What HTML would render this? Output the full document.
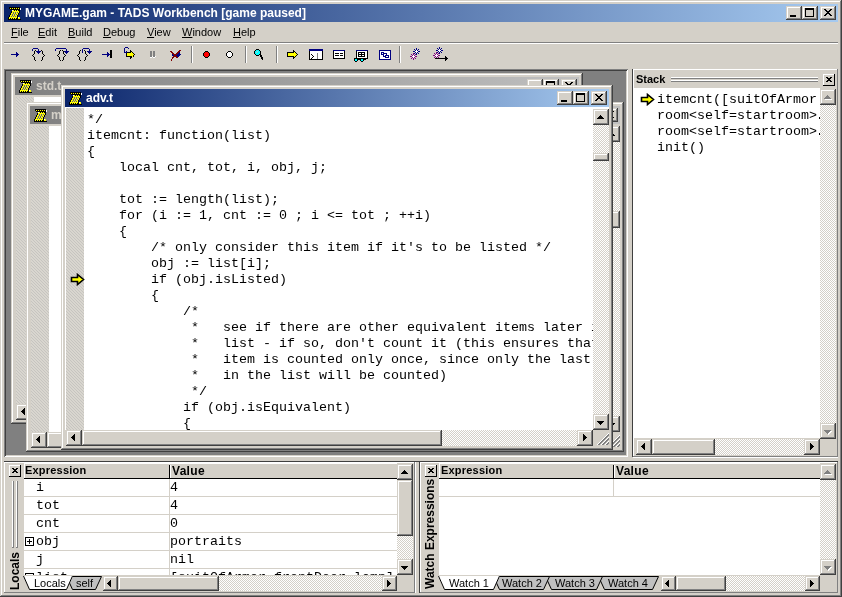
<!DOCTYPE html><html><head><meta charset="utf-8"><style>
*{margin:0;padding:0}
html,body{width:842px;height:597px;overflow:hidden}
body{position:relative;background:#d4d0c8;font-family:"Liberation Sans",sans-serif;font-size:11px;color:#000}
.a{position:absolute}
.t{white-space:pre;line-height:13px}
.mono{font-family:"Liberation Mono",monospace;font-size:13.33px;line-height:16px;white-space:pre}
.trk{background-color:#fff;background-image:conic-gradient(#d4d0c8 25%,#fff 0 50%,#d4d0c8 0 75%,#fff 0);background-size:2px 2px}
.hatch{background:repeating-linear-gradient(45deg,#d9d6cf 0 1.3px,#c6c4c0 1.3px 2.12px)}
</style></head><body><div id="root" style="position:absolute;left:0;top:0;width:842px;height:597px;overflow:hidden;will-change:transform">
<div class="a " style="left:0px;top:0px;width:842px;height:597px;box-shadow:inset -1px -1px #404040,inset 1px 1px #d4d0c8,inset -2px -2px #808080,inset 2px 2px #fff;"></div>
<div class="a " style="left:4px;top:4px;width:834px;height:18px;background:linear-gradient(to right,#0a246a,#a6caf0)"></div>
<svg class="a" style="left:6px;top:5px" width="16" height="16" shape-rendering="crispEdges"><path d="M3 2h1v1h-1zM4 2h1v1h-1zM5 2h1v1h-1zM6 2h1v1h-1zM7 2h1v1h-1zM8 2h1v1h-1zM9 2h1v1h-1zM10 2h1v1h-1zM11 2h1v1h-1zM12 2h1v1h-1zM13 2h1v1h-1zM3 3h1v1h-1zM5 3h1v1h-1zM7 3h1v1h-1zM9 3h1v1h-1zM11 3h1v1h-1zM13 3h1v1h-1zM4 4h1v1h-1zM5 4h1v1h-1zM6 4h1v1h-1zM7 4h1v1h-1zM8 4h1v1h-1zM9 4h1v1h-1zM10 4h1v1h-1zM11 4h1v1h-1zM12 4h1v1h-1zM13 4h1v1h-1zM8 5h1v1h-1zM10 5h1v1h-1zM12 5h1v1h-1zM13 5h1v1h-1zM5 6h1v1h-1zM13 6h1v1h-1zM5 7h1v1h-1zM13 7h1v1h-1zM4 8h1v1h-1zM12 8h1v1h-1zM4 9h1v1h-1zM12 9h1v1h-1zM3 10h1v1h-1zM11 10h1v1h-1zM3 11h1v1h-1zM11 11h1v1h-1zM2 12h1v1h-1zM11 12h1v1h-1zM2 13h1v1h-1zM4 13h1v1h-1zM6 13h1v1h-1zM8 13h1v1h-1zM10 13h1v1h-1zM11 13h1v1h-1zM2 14h1v1h-1zM3 14h1v1h-1zM4 14h1v1h-1zM5 14h1v1h-1zM6 14h1v1h-1zM7 14h1v1h-1zM8 14h1v1h-1zM9 14h1v1h-1zM10 14h1v1h-1zM11 14h1v1h-1zM12 14h1v1h-1zM13 14h1v1h-1zM14 14h1v1h-1z" fill="#000"/><path d="M4 3h1v1h-1zM6 3h1v1h-1zM8 3h1v1h-1zM10 3h1v1h-1zM12 3h1v1h-1zM7 5h1v1h-1zM9 5h1v1h-1zM11 5h1v1h-1zM6 6h1v1h-1zM7 6h1v1h-1zM8 6h1v1h-1zM9 6h1v1h-1zM10 6h1v1h-1zM11 6h1v1h-1zM12 6h1v1h-1zM6 7h1v1h-1zM8 7h1v1h-1zM10 7h1v1h-1zM12 7h1v1h-1zM5 8h1v1h-1zM6 8h1v1h-1zM8 8h1v1h-1zM10 8h1v1h-1zM11 8h1v1h-1zM5 9h1v1h-1zM7 9h1v1h-1zM9 9h1v1h-1zM11 9h1v1h-1zM4 10h1v1h-1zM5 10h1v1h-1zM7 10h1v1h-1zM9 10h1v1h-1zM10 10h1v1h-1zM4 11h1v1h-1zM6 11h1v1h-1zM8 11h1v1h-1zM10 11h1v1h-1zM3 12h1v1h-1zM4 12h1v1h-1zM5 12h1v1h-1zM6 12h1v1h-1zM7 12h1v1h-1zM8 12h1v1h-1zM9 12h1v1h-1zM10 12h1v1h-1zM13 12h1v1h-1zM3 13h1v1h-1zM5 13h1v1h-1zM7 13h1v1h-1zM9 13h1v1h-1zM12 13h1v1h-1zM13 13h1v1h-1z" fill="#ffff00"/><path d="M14 3h1v1h-1zM14 4h1v1h-1zM6 5h1v1h-1zM12 12h1v1h-1z" fill="#fff"/><path d="M7 7h1v1h-1zM9 7h1v1h-1zM11 7h1v1h-1zM7 8h1v1h-1zM9 8h1v1h-1zM6 9h1v1h-1zM8 9h1v1h-1zM10 9h1v1h-1zM6 10h1v1h-1zM8 10h1v1h-1zM5 11h1v1h-1zM7 11h1v1h-1zM9 11h1v1h-1z" fill="#5a5a8a"/></svg>
<div class="a t " style="left:25px;top:7px;color:#fff;font-weight:bold;font-size:12px">MYGAME.gam - TADS Workbench [game paused]</div>
<div class="a " style="left:786px;top:6px;width:16px;height:14px;background:#d4d0c8;box-shadow:inset -1px -1px #404040,inset 1px 1px #d4d0c8,inset -2px -2px #808080,inset 2px 2px #fff;"><div class="a" style="left:4px;top:9px;width:6px;height:2px;background:#000"></div></div>
<div class="a " style="left:802px;top:6px;width:16px;height:14px;background:#d4d0c8;box-shadow:inset -1px -1px #404040,inset 1px 1px #d4d0c8,inset -2px -2px #808080,inset 2px 2px #fff;"><div class="a" style="left:3px;top:2px;width:9px;height:9px;box-sizing:border-box;border:1px solid #000;border-top-width:2px"></div></div>
<div class="a " style="left:820px;top:6px;width:16px;height:14px;background:#d4d0c8;box-shadow:inset -1px -1px #404040,inset 1px 1px #d4d0c8,inset -2px -2px #808080,inset 2px 2px #fff;"><svg class="a" style="left:4px;top:3px" width="8" height="7" viewBox="0 0 8 7"><path d="M0 0h2v1h1v1h2v-1h1v-1h2v1h-1v1h-1v1h-1v1h1v1h1v1h1v1h-2v-1h-1v-1h-2v1h-1v1h-2v-1h1v-1h1v-1h1v-1h-1v-1h-1v-1h-1z" fill="#000"/></svg></div>
<div class="a t " style="left:11px;top:26px;font-size:11px"><u>F</u>ile</div>
<div class="a t " style="left:38px;top:26px;font-size:11px"><u>E</u>dit</div>
<div class="a t " style="left:68px;top:26px;font-size:11px"><u>B</u>uild</div>
<div class="a t " style="left:103px;top:26px;font-size:11px"><u>D</u>ebug</div>
<div class="a t " style="left:147px;top:26px;font-size:11px"><u>V</u>iew</div>
<div class="a t " style="left:182px;top:26px;font-size:11px"><u>W</u>indow</div>
<div class="a t " style="left:233px;top:26px;font-size:11px"><u>H</u>elp</div>
<div class="a" style="left:4px;top:42px;width:834px;height:1px;background:#808080"></div>
<div class="a" style="left:4px;top:43px;width:834px;height:1px;background:#ffffff"></div>
<svg class="a" style="left:8px;top:52px" width="12" height="5" shape-rendering="crispEdges"><path d="M8 0h1v1h-1zM8 1h1v1h-1zM9 1h1v1h-1zM3 2h1v1h-1zM4 2h1v1h-1zM5 2h1v1h-1zM6 2h1v1h-1zM7 2h1v1h-1zM8 2h1v1h-1zM9 2h1v1h-1zM10 2h1v1h-1zM8 3h1v1h-1zM9 3h1v1h-1zM8 4h1v1h-1z" fill="#000080"/></svg>
<svg class="a" style="left:30px;top:48px" width="18" height="13" shape-rendering="crispEdges"><path d="M3 0h1v1h-1zM4 0h1v1h-1zM5 0h1v1h-1zM6 0h1v1h-1zM7 0h1v1h-1zM2 1h1v1h-1zM8 1h1v1h-1zM2 2h1v1h-1zM8 2h1v1h-1zM6 3h1v1h-1zM7 3h1v1h-1zM8 3h1v1h-1zM9 3h1v1h-1zM10 3h1v1h-1zM7 4h1v1h-1zM8 4h1v1h-1zM9 4h1v1h-1zM8 5h1v1h-1z" fill="#000080"/><path d="M5 2h1v1h-1zM11 2h1v1h-1zM4 3h1v1h-1zM12 3h1v1h-1zM4 4h1v1h-1zM12 4h1v1h-1zM4 5h1v1h-1zM12 5h1v1h-1zM3 6h1v1h-1zM13 6h1v1h-1zM2 7h1v1h-1zM14 7h1v1h-1zM3 8h1v1h-1zM13 8h1v1h-1zM4 9h1v1h-1zM12 9h1v1h-1zM4 10h1v1h-1zM12 10h1v1h-1zM4 11h1v1h-1zM12 11h1v1h-1zM5 12h1v1h-1zM11 12h1v1h-1z" fill="#000"/></svg>
<svg class="a" style="left:52px;top:48px" width="18" height="13" shape-rendering="crispEdges"><path d="M4 0h1v1h-1zM5 0h1v1h-1zM6 0h1v1h-1zM7 0h1v1h-1zM8 0h1v1h-1zM9 0h1v1h-1zM10 0h1v1h-1zM11 0h1v1h-1zM12 0h1v1h-1zM13 0h1v1h-1zM3 1h1v1h-1zM14 1h1v1h-1zM3 2h1v1h-1zM14 2h1v1h-1zM12 3h1v1h-1zM13 3h1v1h-1zM14 3h1v1h-1zM15 3h1v1h-1zM16 3h1v1h-1zM13 4h1v1h-1zM14 4h1v1h-1zM15 4h1v1h-1zM14 5h1v1h-1z" fill="#000080"/><path d="M8 2h1v1h-1zM10 2h1v1h-1zM7 3h1v1h-1zM11 3h1v1h-1zM7 4h1v1h-1zM11 4h1v1h-1zM7 5h1v1h-1zM11 5h1v1h-1zM6 6h1v1h-1zM12 6h1v1h-1zM5 7h1v1h-1zM13 7h1v1h-1zM6 8h1v1h-1zM12 8h1v1h-1zM7 9h1v1h-1zM11 9h1v1h-1zM7 10h1v1h-1zM11 10h1v1h-1zM7 11h1v1h-1zM11 11h1v1h-1zM8 12h1v1h-1zM10 12h1v1h-1z" fill="#000"/></svg>
<svg class="a" style="left:75px;top:48px" width="18" height="13" shape-rendering="crispEdges"><path d="M8 0h1v1h-1zM9 0h1v1h-1zM10 0h1v1h-1zM11 0h1v1h-1zM12 0h1v1h-1zM13 0h1v1h-1zM7 1h1v1h-1zM14 1h1v1h-1zM7 2h1v1h-1zM14 2h1v1h-1zM7 3h1v1h-1zM12 3h1v1h-1zM13 3h1v1h-1zM14 3h1v1h-1zM15 3h1v1h-1zM16 3h1v1h-1zM7 4h1v1h-1zM13 4h1v1h-1zM14 4h1v1h-1zM15 4h1v1h-1zM14 5h1v1h-1z" fill="#000080"/><path d="M5 2h1v1h-1zM9 2h1v1h-1zM4 3h1v1h-1zM10 3h1v1h-1zM4 4h1v1h-1zM10 4h1v1h-1zM4 5h1v1h-1zM10 5h1v1h-1zM3 6h1v1h-1zM11 6h1v1h-1zM2 7h1v1h-1zM12 7h1v1h-1zM3 8h1v1h-1zM11 8h1v1h-1zM4 9h1v1h-1zM10 9h1v1h-1zM4 10h1v1h-1zM10 10h1v1h-1zM4 11h1v1h-1zM10 11h1v1h-1zM5 12h1v1h-1zM9 12h1v1h-1z" fill="#000"/></svg>
<svg class="a" style="left:98px;top:50px" width="14" height="8" shape-rendering="crispEdges"><path d="M12 0h1v1h-1zM13 0h1v1h-1zM12 1h1v1h-1zM13 1h1v1h-1zM12 2h1v1h-1zM13 2h1v1h-1zM12 3h1v1h-1zM13 3h1v1h-1zM12 4h1v1h-1zM13 4h1v1h-1zM12 5h1v1h-1zM13 5h1v1h-1zM12 6h1v1h-1zM13 6h1v1h-1zM12 7h1v1h-1zM13 7h1v1h-1z" fill="#000"/><path d="M9 2h1v1h-1zM9 3h1v1h-1zM10 3h1v1h-1zM4 4h1v1h-1zM5 4h1v1h-1zM6 4h1v1h-1zM7 4h1v1h-1zM8 4h1v1h-1zM9 4h1v1h-1zM10 4h1v1h-1zM11 4h1v1h-1zM9 5h1v1h-1zM10 5h1v1h-1zM9 6h1v1h-1z" fill="#000080"/></svg>
<svg class="a" style="left:120px;top:47px" width="16" height="12" shape-rendering="crispEdges"><path d="M5 0h1v1h-1zM6 0h1v1h-1zM7 0h1v1h-1zM4 1h1v1h-1zM8 1h1v1h-1zM4 2h1v1h-1zM4 3h1v1h-1zM4 4h1v1h-1zM6 4h1v1h-1zM4 5h1v1h-1zM5 5h1v1h-1zM6 5h1v1h-1z" fill="#000080"/><path d="M10 3h1v1h-1zM10 4h1v1h-1zM11 4h1v1h-1zM7 5h1v1h-1zM8 5h1v1h-1zM9 5h1v1h-1zM10 5h1v1h-1zM12 5h1v1h-1zM6 6h1v1h-1zM13 6h1v1h-1zM6 7h1v1h-1zM14 7h1v1h-1zM6 8h1v1h-1zM13 8h1v1h-1zM6 9h1v1h-1zM7 9h1v1h-1zM8 9h1v1h-1zM9 9h1v1h-1zM10 9h1v1h-1zM11 9h1v1h-1zM13 9h1v1h-1zM10 10h1v1h-1zM11 10h1v1h-1zM10 11h1v1h-1z" fill="#000"/><path d="M11 5h1v1h-1zM7 6h1v1h-1zM8 6h1v1h-1zM9 6h1v1h-1zM10 6h1v1h-1zM11 6h1v1h-1zM12 6h1v1h-1zM7 7h1v1h-1zM8 7h1v1h-1zM9 7h1v1h-1zM10 7h1v1h-1zM11 7h1v1h-1zM12 7h1v1h-1zM13 7h1v1h-1zM7 8h1v1h-1zM8 8h1v1h-1zM9 8h1v1h-1zM10 8h1v1h-1zM11 8h1v1h-1zM12 8h1v1h-1zM12 9h1v1h-1z" fill="#ffff00"/></svg>
<svg class="a" style="left:150px;top:51px" width="6" height="7" shape-rendering="crispEdges"><path d="M0 0h1v1h-1zM1 0h1v1h-1zM3 0h1v1h-1zM4 0h1v1h-1zM0 1h1v1h-1zM1 1h1v1h-1zM3 1h1v1h-1zM4 1h1v1h-1zM0 2h1v1h-1zM1 2h1v1h-1zM3 2h1v1h-1zM4 2h1v1h-1zM0 3h1v1h-1zM1 3h1v1h-1zM3 3h1v1h-1zM4 3h1v1h-1zM0 4h1v1h-1zM1 4h1v1h-1zM3 4h1v1h-1zM4 4h1v1h-1zM0 5h1v1h-1zM1 5h1v1h-1zM3 5h1v1h-1zM4 5h1v1h-1z" fill="#808080"/><path d="M2 5h1v1h-1zM5 5h1v1h-1zM0 6h1v1h-1zM1 6h1v1h-1zM3 6h1v1h-1zM4 6h1v1h-1z" fill="#fff"/></svg>
<svg class="a" style="left:169px;top:49px" width="12" height="12" shape-rendering="crispEdges"><path d="M10 1h1v1h-1zM11 1h1v1h-1zM1 2h1v1h-1zM2 2h1v1h-1zM9 2h1v1h-1zM10 2h1v1h-1zM2 3h1v1h-1zM3 3h1v1h-1zM8 3h1v1h-1zM9 3h1v1h-1zM3 4h1v1h-1zM4 4h1v1h-1zM7 4h1v1h-1zM8 4h1v1h-1zM4 5h1v1h-1zM5 5h1v1h-1zM6 5h1v1h-1zM7 5h1v1h-1zM5 6h1v1h-1zM6 6h1v1h-1zM4 7h1v1h-1zM5 7h1v1h-1zM6 7h1v1h-1zM7 7h1v1h-1zM3 8h1v1h-1zM4 8h1v1h-1zM7 8h1v1h-1zM8 8h1v1h-1zM3 9h1v1h-1zM2 10h1v1h-1zM2 11h1v1h-1z" fill="#800000"/><path d="M10 3h1v1h-1zM9 4h1v1h-1zM10 4h1v1h-1zM3 5h1v1h-1zM8 5h1v1h-1zM9 5h1v1h-1zM10 5h1v1h-1zM11 5h1v1h-1zM3 6h1v1h-1zM4 6h1v1h-1zM7 6h1v1h-1zM8 6h1v1h-1zM9 6h1v1h-1zM10 6h1v1h-1zM8 7h1v1h-1zM9 7h1v1h-1z" fill="#000080"/></svg>
<div class="a" style="left:191px;top:46px;width:1px;height:17px;background:#808080"></div>
<div class="a" style="left:192px;top:46px;width:1px;height:17px;background:#ffffff"></div>
<svg class="a" style="left:203px;top:51px" width="7" height="7" shape-rendering="crispEdges"><path d="M2 0h1v1h-1zM3 0h1v1h-1zM4 0h1v1h-1zM1 1h1v1h-1zM5 1h1v1h-1zM0 2h1v1h-1zM6 2h1v1h-1zM0 3h1v1h-1zM6 3h1v1h-1zM0 4h1v1h-1zM6 4h1v1h-1zM1 5h1v1h-1zM5 5h1v1h-1zM2 6h1v1h-1zM3 6h1v1h-1zM4 6h1v1h-1z" fill="#000"/><path d="M2 1h1v1h-1zM3 1h1v1h-1zM4 1h1v1h-1zM1 2h1v1h-1zM2 2h1v1h-1zM3 2h1v1h-1zM4 2h1v1h-1zM5 2h1v1h-1zM1 3h1v1h-1zM2 3h1v1h-1zM3 3h1v1h-1zM4 3h1v1h-1zM5 3h1v1h-1zM1 4h1v1h-1zM2 4h1v1h-1zM3 4h1v1h-1zM4 4h1v1h-1zM5 4h1v1h-1zM2 5h1v1h-1zM3 5h1v1h-1zM4 5h1v1h-1z" fill="#ff0000"/></svg>
<svg class="a" style="left:226px;top:51px" width="7" height="7" shape-rendering="crispEdges"><path d="M2 0h1v1h-1zM3 0h1v1h-1zM4 0h1v1h-1zM1 1h1v1h-1zM5 1h1v1h-1zM0 2h1v1h-1zM6 2h1v1h-1zM0 3h1v1h-1zM6 3h1v1h-1zM0 4h1v1h-1zM6 4h1v1h-1zM1 5h1v1h-1zM5 5h1v1h-1zM2 6h1v1h-1zM3 6h1v1h-1zM4 6h1v1h-1z" fill="#000"/><path d="M2 1h1v1h-1zM3 1h1v1h-1zM4 1h1v1h-1zM1 2h1v1h-1zM2 2h1v1h-1zM3 2h1v1h-1zM4 2h1v1h-1zM5 2h1v1h-1zM1 3h1v1h-1zM2 3h1v1h-1zM3 3h1v1h-1zM4 3h1v1h-1zM5 3h1v1h-1zM1 4h1v1h-1zM2 4h1v1h-1zM3 4h1v1h-1zM4 4h1v1h-1zM5 4h1v1h-1zM2 5h1v1h-1zM3 5h1v1h-1zM4 5h1v1h-1z" fill="#fff"/></svg>
<div class="a" style="left:245px;top:46px;width:1px;height:17px;background:#808080"></div>
<div class="a" style="left:246px;top:46px;width:1px;height:17px;background:#ffffff"></div>
<svg class="a" style="left:254px;top:49px" width="10" height="11" shape-rendering="crispEdges"><path d="M2 0h1v1h-1zM3 0h1v1h-1zM4 0h1v1h-1zM1 1h1v1h-1zM5 1h1v1h-1zM0 2h1v1h-1zM6 2h1v1h-1zM0 3h1v1h-1zM6 3h1v1h-1zM0 4h1v1h-1zM6 4h1v1h-1zM1 5h1v1h-1zM5 5h1v1h-1zM6 5h1v1h-1zM2 6h1v1h-1zM3 6h1v1h-1zM4 6h1v1h-1zM6 6h1v1h-1zM7 6h1v1h-1zM6 7h1v1h-1zM7 7h1v1h-1zM7 8h1v1h-1zM8 8h1v1h-1zM7 9h1v1h-1zM8 9h1v1h-1zM8 10h1v1h-1z" fill="#000"/><path d="M2 1h1v1h-1zM3 1h1v1h-1zM4 1h1v1h-1zM1 2h1v1h-1zM2 2h1v1h-1zM4 2h1v1h-1zM5 2h1v1h-1zM1 3h1v1h-1zM3 3h1v1h-1zM4 3h1v1h-1zM5 3h1v1h-1zM1 4h1v1h-1zM2 4h1v1h-1zM3 4h1v1h-1zM4 4h1v1h-1zM5 4h1v1h-1zM2 5h1v1h-1zM3 5h1v1h-1zM4 5h1v1h-1z" fill="#00ffff"/><path d="M3 2h1v1h-1zM2 3h1v1h-1z" fill="#c0c0c0"/></svg>
<div class="a" style="left:276px;top:46px;width:1px;height:17px;background:#808080"></div>
<div class="a" style="left:277px;top:46px;width:1px;height:17px;background:#ffffff"></div>
<svg class="a" style="left:287px;top:50px" width="11" height="9" shape-rendering="crispEdges"><path d="M6 0h1v1h-1zM6 1h1v1h-1zM7 1h1v1h-1zM0 2h1v1h-1zM1 2h1v1h-1zM2 2h1v1h-1zM3 2h1v1h-1zM4 2h1v1h-1zM5 2h1v1h-1zM6 2h1v1h-1zM8 2h1v1h-1zM0 3h1v1h-1zM9 3h1v1h-1zM0 4h1v1h-1zM10 4h1v1h-1zM0 5h1v1h-1zM9 5h1v1h-1zM0 6h1v1h-1zM1 6h1v1h-1zM2 6h1v1h-1zM3 6h1v1h-1zM4 6h1v1h-1zM5 6h1v1h-1zM6 6h1v1h-1zM8 6h1v1h-1zM6 7h1v1h-1zM7 7h1v1h-1zM6 8h1v1h-1z" fill="#000"/><path d="M7 2h1v1h-1zM1 3h1v1h-1zM2 3h1v1h-1zM3 3h1v1h-1zM4 3h1v1h-1zM5 3h1v1h-1zM6 3h1v1h-1zM7 3h1v1h-1zM8 3h1v1h-1zM1 4h1v1h-1zM2 4h1v1h-1zM3 4h1v1h-1zM4 4h1v1h-1zM5 4h1v1h-1zM6 4h1v1h-1zM7 4h1v1h-1zM8 4h1v1h-1zM9 4h1v1h-1zM1 5h1v1h-1zM2 5h1v1h-1zM3 5h1v1h-1zM4 5h1v1h-1zM5 5h1v1h-1zM6 5h1v1h-1zM7 5h1v1h-1zM8 5h1v1h-1zM7 6h1v1h-1z" fill="#ffff00"/></svg>
<svg class="a" style="left:309px;top:49px" width="14" height="11" shape-rendering="crispEdges"><path d="M0 0h1v1h-1zM1 0h1v1h-1zM2 0h1v1h-1zM3 0h1v1h-1zM4 0h1v1h-1zM5 0h1v1h-1zM6 0h1v1h-1zM7 0h1v1h-1zM8 0h1v1h-1zM9 0h1v1h-1zM10 0h1v1h-1zM11 0h1v1h-1zM12 0h1v1h-1zM13 0h1v1h-1zM0 1h1v1h-1zM1 1h1v1h-1zM2 1h1v1h-1zM3 1h1v1h-1zM4 1h1v1h-1zM5 1h1v1h-1zM6 1h1v1h-1zM7 1h1v1h-1zM8 1h1v1h-1zM9 1h1v1h-1zM10 1h1v1h-1zM11 1h1v1h-1zM12 1h1v1h-1zM13 1h1v1h-1z" fill="#000080"/><path d="M0 2h1v1h-1zM13 2h1v1h-1zM0 3h1v1h-1zM13 3h1v1h-1zM0 4h1v1h-1zM13 4h1v1h-1zM0 5h1v1h-1zM2 5h1v1h-1zM13 5h1v1h-1zM0 6h1v1h-1zM3 6h1v1h-1zM13 6h1v1h-1zM0 7h1v1h-1zM4 7h1v1h-1zM13 7h1v1h-1zM0 8h1v1h-1zM3 8h1v1h-1zM13 8h1v1h-1zM0 9h1v1h-1zM2 9h1v1h-1zM13 9h1v1h-1zM0 10h1v1h-1zM1 10h1v1h-1zM2 10h1v1h-1zM3 10h1v1h-1zM4 10h1v1h-1zM5 10h1v1h-1zM6 10h1v1h-1zM7 10h1v1h-1zM8 10h1v1h-1zM9 10h1v1h-1zM10 10h1v1h-1zM11 10h1v1h-1zM12 10h1v1h-1zM13 10h1v1h-1z" fill="#000"/><path d="M1 2h1v1h-1zM2 2h1v1h-1zM3 2h1v1h-1zM4 2h1v1h-1zM5 2h1v1h-1zM6 2h1v1h-1zM7 2h1v1h-1zM8 2h1v1h-1zM9 2h1v1h-1zM10 2h1v1h-1zM11 2h1v1h-1zM12 2h1v1h-1zM1 3h1v1h-1zM2 3h1v1h-1zM3 3h1v1h-1zM4 3h1v1h-1zM5 3h1v1h-1zM6 3h1v1h-1zM7 3h1v1h-1zM8 3h1v1h-1zM9 3h1v1h-1zM10 3h1v1h-1zM11 3h1v1h-1zM12 3h1v1h-1zM1 4h1v1h-1zM2 4h1v1h-1zM3 4h1v1h-1zM4 4h1v1h-1zM5 4h1v1h-1zM6 4h1v1h-1zM7 4h1v1h-1zM9 4h1v1h-1zM10 4h1v1h-1zM11 4h1v1h-1zM12 4h1v1h-1zM1 5h1v1h-1zM3 5h1v1h-1zM4 5h1v1h-1zM5 5h1v1h-1zM6 5h1v1h-1zM7 5h1v1h-1zM9 5h1v1h-1zM10 5h1v1h-1zM11 5h1v1h-1zM12 5h1v1h-1zM1 6h1v1h-1zM2 6h1v1h-1zM4 6h1v1h-1zM5 6h1v1h-1zM6 6h1v1h-1zM7 6h1v1h-1zM9 6h1v1h-1zM10 6h1v1h-1zM11 6h1v1h-1zM12 6h1v1h-1zM1 7h1v1h-1zM2 7h1v1h-1zM3 7h1v1h-1zM5 7h1v1h-1zM6 7h1v1h-1zM7 7h1v1h-1zM9 7h1v1h-1zM10 7h1v1h-1zM11 7h1v1h-1zM12 7h1v1h-1zM1 8h1v1h-1zM2 8h1v1h-1zM4 8h1v1h-1zM5 8h1v1h-1zM6 8h1v1h-1zM7 8h1v1h-1zM9 8h1v1h-1zM10 8h1v1h-1zM11 8h1v1h-1zM12 8h1v1h-1zM1 9h1v1h-1zM3 9h1v1h-1zM4 9h1v1h-1zM5 9h1v1h-1zM6 9h1v1h-1zM7 9h1v1h-1zM9 9h1v1h-1zM10 9h1v1h-1zM11 9h1v1h-1zM12 9h1v1h-1z" fill="#fff"/><path d="M8 4h1v1h-1zM8 5h1v1h-1zM8 6h1v1h-1zM8 7h1v1h-1zM8 8h1v1h-1zM8 9h1v1h-1z" fill="#808080"/></svg>
<svg class="a" style="left:333px;top:50px" width="12" height="9" shape-rendering="crispEdges"><path d="M0 0h1v1h-1zM1 0h1v1h-1zM2 0h1v1h-1zM3 0h1v1h-1zM4 0h1v1h-1zM5 0h1v1h-1zM6 0h1v1h-1zM7 0h1v1h-1zM8 0h1v1h-1zM9 0h1v1h-1zM10 0h1v1h-1zM11 0h1v1h-1z" fill="#000080"/><path d="M0 1h1v1h-1zM11 1h1v1h-1zM0 2h1v1h-1zM11 2h1v1h-1zM0 3h1v1h-1zM2 3h1v1h-1zM3 3h1v1h-1zM4 3h1v1h-1zM5 3h1v1h-1zM7 3h1v1h-1zM8 3h1v1h-1zM9 3h1v1h-1zM11 3h1v1h-1zM0 4h1v1h-1zM11 4h1v1h-1zM0 5h1v1h-1zM2 5h1v1h-1zM3 5h1v1h-1zM4 5h1v1h-1zM5 5h1v1h-1zM7 5h1v1h-1zM8 5h1v1h-1zM9 5h1v1h-1zM11 5h1v1h-1zM0 6h1v1h-1zM11 6h1v1h-1zM0 7h1v1h-1zM11 7h1v1h-1zM0 8h1v1h-1zM1 8h1v1h-1zM2 8h1v1h-1zM3 8h1v1h-1zM4 8h1v1h-1zM5 8h1v1h-1zM6 8h1v1h-1zM7 8h1v1h-1zM8 8h1v1h-1zM9 8h1v1h-1zM10 8h1v1h-1zM11 8h1v1h-1z" fill="#000"/><path d="M1 1h1v1h-1zM2 1h1v1h-1zM3 1h1v1h-1zM4 1h1v1h-1zM5 1h1v1h-1zM6 1h1v1h-1zM7 1h1v1h-1zM8 1h1v1h-1zM9 1h1v1h-1zM10 1h1v1h-1zM1 2h1v1h-1zM2 2h1v1h-1zM3 2h1v1h-1zM4 2h1v1h-1zM5 2h1v1h-1zM6 2h1v1h-1zM7 2h1v1h-1zM8 2h1v1h-1zM9 2h1v1h-1zM10 2h1v1h-1zM1 3h1v1h-1zM6 3h1v1h-1zM10 3h1v1h-1zM1 4h1v1h-1zM2 4h1v1h-1zM3 4h1v1h-1zM4 4h1v1h-1zM5 4h1v1h-1zM6 4h1v1h-1zM7 4h1v1h-1zM8 4h1v1h-1zM9 4h1v1h-1zM10 4h1v1h-1zM1 5h1v1h-1zM6 5h1v1h-1zM10 5h1v1h-1zM1 6h1v1h-1zM2 6h1v1h-1zM3 6h1v1h-1zM4 6h1v1h-1zM5 6h1v1h-1zM6 6h1v1h-1zM7 6h1v1h-1zM8 6h1v1h-1zM9 6h1v1h-1zM10 6h1v1h-1zM1 7h1v1h-1zM2 7h1v1h-1zM3 7h1v1h-1zM4 7h1v1h-1zM5 7h1v1h-1zM6 7h1v1h-1zM7 7h1v1h-1zM8 7h1v1h-1zM9 7h1v1h-1zM10 7h1v1h-1z" fill="#fff"/></svg>
<svg class="a" style="left:354px;top:50px" width="14" height="12" shape-rendering="crispEdges"><path d="M2 0h1v1h-1zM3 0h1v1h-1zM4 0h1v1h-1zM5 0h1v1h-1zM6 0h1v1h-1zM7 0h1v1h-1zM8 0h1v1h-1zM9 0h1v1h-1zM10 0h1v1h-1zM11 0h1v1h-1zM12 0h1v1h-1zM13 0h1v1h-1z" fill="#000080"/><path d="M2 1h1v1h-1zM13 1h1v1h-1zM2 2h1v1h-1zM4 2h1v1h-1zM5 2h1v1h-1zM6 2h1v1h-1zM7 2h1v1h-1zM8 2h1v1h-1zM9 2h1v1h-1zM10 2h1v1h-1zM13 2h1v1h-1zM2 3h1v1h-1zM4 3h1v1h-1zM7 3h1v1h-1zM10 3h1v1h-1zM13 3h1v1h-1zM2 4h1v1h-1zM4 4h1v1h-1zM5 4h1v1h-1zM6 4h1v1h-1zM7 4h1v1h-1zM8 4h1v1h-1zM9 4h1v1h-1zM10 4h1v1h-1zM13 4h1v1h-1zM2 5h1v1h-1zM4 5h1v1h-1zM7 5h1v1h-1zM10 5h1v1h-1zM13 5h1v1h-1zM2 6h1v1h-1zM4 6h1v1h-1zM5 6h1v1h-1zM6 6h1v1h-1zM7 6h1v1h-1zM8 6h1v1h-1zM9 6h1v1h-1zM10 6h1v1h-1zM13 6h1v1h-1zM2 7h1v1h-1zM13 7h1v1h-1zM0 8h1v1h-1zM1 8h1v1h-1zM2 8h1v1h-1zM3 8h1v1h-1zM4 8h1v1h-1zM5 8h1v1h-1zM6 8h1v1h-1zM7 8h1v1h-1zM8 8h1v1h-1zM9 8h1v1h-1zM10 8h1v1h-1zM11 8h1v1h-1zM12 8h1v1h-1zM13 8h1v1h-1zM0 9h1v1h-1zM3 9h1v1h-1zM4 9h1v1h-1zM5 9h1v1h-1zM6 9h1v1h-1zM9 9h1v1h-1zM10 9h1v1h-1zM11 9h1v1h-1zM0 10h1v1h-1zM3 10h1v1h-1zM6 10h1v1h-1zM9 10h1v1h-1zM1 11h1v1h-1zM2 11h1v1h-1zM7 11h1v1h-1zM8 11h1v1h-1z" fill="#000"/><path d="M3 1h1v1h-1zM4 1h1v1h-1zM5 1h1v1h-1zM6 1h1v1h-1zM7 1h1v1h-1zM8 1h1v1h-1zM9 1h1v1h-1zM10 1h1v1h-1zM11 1h1v1h-1zM12 1h1v1h-1zM3 2h1v1h-1zM11 2h1v1h-1zM12 2h1v1h-1zM3 3h1v1h-1zM5 3h1v1h-1zM6 3h1v1h-1zM8 3h1v1h-1zM9 3h1v1h-1zM11 3h1v1h-1zM12 3h1v1h-1zM3 4h1v1h-1zM11 4h1v1h-1zM12 4h1v1h-1zM3 5h1v1h-1zM5 5h1v1h-1zM6 5h1v1h-1zM8 5h1v1h-1zM9 5h1v1h-1zM11 5h1v1h-1zM12 5h1v1h-1zM3 6h1v1h-1zM11 6h1v1h-1zM12 6h1v1h-1zM3 7h1v1h-1zM4 7h1v1h-1zM5 7h1v1h-1zM6 7h1v1h-1zM7 7h1v1h-1zM8 7h1v1h-1zM9 7h1v1h-1zM10 7h1v1h-1zM11 7h1v1h-1zM12 7h1v1h-1z" fill="#fff"/><path d="M1 9h1v1h-1zM2 9h1v1h-1zM7 9h1v1h-1zM8 9h1v1h-1zM1 10h1v1h-1zM2 10h1v1h-1zM7 10h1v1h-1zM8 10h1v1h-1z" fill="#00ffff"/></svg>
<svg class="a" style="left:379px;top:50px" width="12" height="10" shape-rendering="crispEdges"><path d="M0 0h1v1h-1zM1 0h1v1h-1zM2 0h1v1h-1zM3 0h1v1h-1zM4 0h1v1h-1zM5 0h1v1h-1zM6 0h1v1h-1zM7 0h1v1h-1zM8 0h1v1h-1zM9 0h1v1h-1zM10 0h1v1h-1zM11 0h1v1h-1zM0 1h1v1h-1zM11 1h1v1h-1zM0 2h1v1h-1zM2 2h1v1h-1zM3 2h1v1h-1zM4 2h1v1h-1zM11 2h1v1h-1zM0 3h1v1h-1zM2 3h1v1h-1zM4 3h1v1h-1zM5 3h1v1h-1zM6 3h1v1h-1zM7 3h1v1h-1zM11 3h1v1h-1zM0 4h1v1h-1zM2 4h1v1h-1zM3 4h1v1h-1zM4 4h1v1h-1zM7 4h1v1h-1zM11 4h1v1h-1zM0 5h1v1h-1zM4 5h1v1h-1zM6 5h1v1h-1zM7 5h1v1h-1zM8 5h1v1h-1zM9 5h1v1h-1zM11 5h1v1h-1zM0 6h1v1h-1zM4 6h1v1h-1zM5 6h1v1h-1zM6 6h1v1h-1zM9 6h1v1h-1zM11 6h1v1h-1zM0 7h1v1h-1zM6 7h1v1h-1zM7 7h1v1h-1zM8 7h1v1h-1zM9 7h1v1h-1zM11 7h1v1h-1zM0 8h1v1h-1zM11 8h1v1h-1zM0 9h1v1h-1zM1 9h1v1h-1zM2 9h1v1h-1zM3 9h1v1h-1zM4 9h1v1h-1zM5 9h1v1h-1zM6 9h1v1h-1zM7 9h1v1h-1zM8 9h1v1h-1zM9 9h1v1h-1zM10 9h1v1h-1zM11 9h1v1h-1z" fill="#000080"/><path d="M1 1h1v1h-1zM2 1h1v1h-1zM3 1h1v1h-1zM4 1h1v1h-1zM5 1h1v1h-1zM6 1h1v1h-1zM7 1h1v1h-1zM8 1h1v1h-1zM9 1h1v1h-1zM10 1h1v1h-1zM1 2h1v1h-1zM5 2h1v1h-1zM6 2h1v1h-1zM7 2h1v1h-1zM8 2h1v1h-1zM9 2h1v1h-1zM10 2h1v1h-1zM1 3h1v1h-1zM3 3h1v1h-1zM8 3h1v1h-1zM9 3h1v1h-1zM10 3h1v1h-1zM1 4h1v1h-1zM5 4h1v1h-1zM6 4h1v1h-1zM8 4h1v1h-1zM9 4h1v1h-1zM10 4h1v1h-1zM1 5h1v1h-1zM2 5h1v1h-1zM3 5h1v1h-1zM5 5h1v1h-1zM10 5h1v1h-1zM1 6h1v1h-1zM2 6h1v1h-1zM3 6h1v1h-1zM7 6h1v1h-1zM8 6h1v1h-1zM10 6h1v1h-1zM1 7h1v1h-1zM2 7h1v1h-1zM3 7h1v1h-1zM4 7h1v1h-1zM5 7h1v1h-1zM10 7h1v1h-1zM1 8h1v1h-1zM2 8h1v1h-1zM3 8h1v1h-1zM4 8h1v1h-1zM5 8h1v1h-1zM6 8h1v1h-1zM7 8h1v1h-1zM8 8h1v1h-1zM9 8h1v1h-1zM10 8h1v1h-1z" fill="#fff"/></svg>
<div class="a" style="left:399px;top:46px;width:1px;height:17px;background:#808080"></div>
<div class="a" style="left:400px;top:46px;width:1px;height:17px;background:#ffffff"></div>
<svg class="a" style="left:413px;top:48px" width="7" height="7" shape-rendering="crispEdges"><path d="M3 0h1v1h-1zM1 1h1v1h-1zM3 1h1v1h-1zM5 1h1v1h-1zM2 2h1v1h-1zM4 2h1v1h-1zM0 3h1v1h-1zM1 3h1v1h-1zM5 3h1v1h-1zM6 3h1v1h-1zM2 4h1v1h-1zM4 4h1v1h-1zM1 5h1v1h-1zM3 5h1v1h-1zM5 5h1v1h-1zM3 6h1v1h-1z" fill="#000080"/><path d="M3 2h1v1h-1zM2 3h1v1h-1zM3 3h1v1h-1zM4 3h1v1h-1zM3 4h1v1h-1z" fill="#fff"/></svg>
<svg class="a" style="left:410px;top:53px" width="7" height="7" shape-rendering="crispEdges"><path d="M3 0h1v1h-1zM1 1h1v1h-1zM3 1h1v1h-1zM5 1h1v1h-1zM2 2h1v1h-1zM4 2h1v1h-1zM0 3h1v1h-1zM1 3h1v1h-1zM5 3h1v1h-1zM6 3h1v1h-1zM2 4h1v1h-1zM4 4h1v1h-1zM1 5h1v1h-1zM3 5h1v1h-1zM5 5h1v1h-1zM3 6h1v1h-1z" fill="#800080"/><path d="M3 2h1v1h-1zM2 3h1v1h-1zM3 3h1v1h-1zM4 3h1v1h-1zM3 4h1v1h-1z" fill="#fff"/></svg>
<svg class="a" style="left:436px;top:47px" width="7" height="7" shape-rendering="crispEdges"><path d="M3 0h1v1h-1zM1 1h1v1h-1zM3 1h1v1h-1zM5 1h1v1h-1zM2 2h1v1h-1zM4 2h1v1h-1zM0 3h1v1h-1zM1 3h1v1h-1zM5 3h1v1h-1zM6 3h1v1h-1zM2 4h1v1h-1zM4 4h1v1h-1zM1 5h1v1h-1zM3 5h1v1h-1zM5 5h1v1h-1zM3 6h1v1h-1z" fill="#000080"/><path d="M3 2h1v1h-1zM2 3h1v1h-1zM3 3h1v1h-1zM4 3h1v1h-1zM3 4h1v1h-1z" fill="#fff"/></svg>
<svg class="a" style="left:433px;top:52px" width="7" height="7" shape-rendering="crispEdges"><path d="M3 0h1v1h-1zM1 1h1v1h-1zM3 1h1v1h-1zM5 1h1v1h-1zM2 2h1v1h-1zM4 2h1v1h-1zM0 3h1v1h-1zM1 3h1v1h-1zM5 3h1v1h-1zM6 3h1v1h-1zM2 4h1v1h-1zM4 4h1v1h-1zM1 5h1v1h-1zM3 5h1v1h-1zM5 5h1v1h-1zM3 6h1v1h-1z" fill="#800080"/><path d="M3 2h1v1h-1zM2 3h1v1h-1zM3 3h1v1h-1zM4 3h1v1h-1zM3 4h1v1h-1z" fill="#fff"/></svg>
<svg class="a" style="left:435px;top:56px" width="14" height="5" shape-rendering="crispEdges"><path d="M10 0h1v1h-1zM10 1h1v1h-1zM11 1h1v1h-1zM0 2h1v1h-1zM1 2h1v1h-1zM2 2h1v1h-1zM3 2h1v1h-1zM4 2h1v1h-1zM5 2h1v1h-1zM6 2h1v1h-1zM7 2h1v1h-1zM8 2h1v1h-1zM9 2h1v1h-1zM10 2h1v1h-1zM11 2h1v1h-1zM12 2h1v1h-1zM10 3h1v1h-1zM11 3h1v1h-1zM10 4h1v1h-1z" fill="#000"/></svg>
<div class="a " style="left:4px;top:69px;width:624px;height:388px;background:#808080;box-shadow:inset 1px 1px #808080,inset -1px -1px #fff,inset 2px 2px #404040,inset -2px -2px #d4d0c8;"></div>
<div class="a " style="left:11px;top:73px;width:572px;height:351px;background:#d4d0c8;box-shadow:inset -1px -1px #404040,inset 1px 1px #d4d0c8,inset -2px -2px #808080,inset 2px 2px #fff;"></div>
<div class="a " style="left:15px;top:77px;width:564px;height:18px;background:linear-gradient(to right,#808080,#c0c0c0)"></div>
<svg class="a" style="left:17px;top:78px" width="16" height="16" shape-rendering="crispEdges"><path d="M3 2h1v1h-1zM4 2h1v1h-1zM5 2h1v1h-1zM6 2h1v1h-1zM7 2h1v1h-1zM8 2h1v1h-1zM9 2h1v1h-1zM10 2h1v1h-1zM11 2h1v1h-1zM12 2h1v1h-1zM13 2h1v1h-1zM3 3h1v1h-1zM5 3h1v1h-1zM7 3h1v1h-1zM9 3h1v1h-1zM11 3h1v1h-1zM13 3h1v1h-1zM4 4h1v1h-1zM5 4h1v1h-1zM6 4h1v1h-1zM7 4h1v1h-1zM8 4h1v1h-1zM9 4h1v1h-1zM10 4h1v1h-1zM11 4h1v1h-1zM12 4h1v1h-1zM13 4h1v1h-1zM8 5h1v1h-1zM10 5h1v1h-1zM12 5h1v1h-1zM13 5h1v1h-1zM5 6h1v1h-1zM13 6h1v1h-1zM5 7h1v1h-1zM13 7h1v1h-1zM4 8h1v1h-1zM12 8h1v1h-1zM4 9h1v1h-1zM12 9h1v1h-1zM3 10h1v1h-1zM11 10h1v1h-1zM3 11h1v1h-1zM11 11h1v1h-1zM2 12h1v1h-1zM11 12h1v1h-1zM2 13h1v1h-1zM4 13h1v1h-1zM6 13h1v1h-1zM8 13h1v1h-1zM10 13h1v1h-1zM11 13h1v1h-1zM2 14h1v1h-1zM3 14h1v1h-1zM4 14h1v1h-1zM5 14h1v1h-1zM6 14h1v1h-1zM7 14h1v1h-1zM8 14h1v1h-1zM9 14h1v1h-1zM10 14h1v1h-1zM11 14h1v1h-1zM12 14h1v1h-1zM13 14h1v1h-1zM14 14h1v1h-1z" fill="#000"/><path d="M4 3h1v1h-1zM6 3h1v1h-1zM8 3h1v1h-1zM10 3h1v1h-1zM12 3h1v1h-1zM7 5h1v1h-1zM9 5h1v1h-1zM11 5h1v1h-1zM6 6h1v1h-1zM7 6h1v1h-1zM8 6h1v1h-1zM9 6h1v1h-1zM10 6h1v1h-1zM11 6h1v1h-1zM12 6h1v1h-1zM6 7h1v1h-1zM8 7h1v1h-1zM10 7h1v1h-1zM12 7h1v1h-1zM5 8h1v1h-1zM6 8h1v1h-1zM8 8h1v1h-1zM10 8h1v1h-1zM11 8h1v1h-1zM5 9h1v1h-1zM7 9h1v1h-1zM9 9h1v1h-1zM11 9h1v1h-1zM4 10h1v1h-1zM5 10h1v1h-1zM7 10h1v1h-1zM9 10h1v1h-1zM10 10h1v1h-1zM4 11h1v1h-1zM6 11h1v1h-1zM8 11h1v1h-1zM10 11h1v1h-1zM3 12h1v1h-1zM4 12h1v1h-1zM5 12h1v1h-1zM6 12h1v1h-1zM7 12h1v1h-1zM8 12h1v1h-1zM9 12h1v1h-1zM10 12h1v1h-1zM13 12h1v1h-1zM3 13h1v1h-1zM5 13h1v1h-1zM7 13h1v1h-1zM9 13h1v1h-1zM12 13h1v1h-1zM13 13h1v1h-1z" fill="#ffff00"/><path d="M14 3h1v1h-1zM14 4h1v1h-1zM6 5h1v1h-1zM12 12h1v1h-1z" fill="#fff"/><path d="M7 7h1v1h-1zM9 7h1v1h-1zM11 7h1v1h-1zM7 8h1v1h-1zM9 8h1v1h-1zM6 9h1v1h-1zM8 9h1v1h-1zM10 9h1v1h-1zM6 10h1v1h-1zM8 10h1v1h-1zM5 11h1v1h-1zM7 11h1v1h-1zM9 11h1v1h-1z" fill="#5a5a8a"/></svg>
<div class="a t " style="left:36px;top:80px;font-weight:bold;font-size:12px;color:#d4d0c8">std.t</div>
<div class="a " style="left:527px;top:79px;width:16px;height:14px;background:#d4d0c8;box-shadow:inset -1px -1px #404040,inset 1px 1px #d4d0c8,inset -2px -2px #808080,inset 2px 2px #fff;"><div class="a" style="left:4px;top:9px;width:6px;height:2px;background:#000"></div></div>
<div class="a " style="left:543px;top:79px;width:16px;height:14px;background:#d4d0c8;box-shadow:inset -1px -1px #404040,inset 1px 1px #d4d0c8,inset -2px -2px #808080,inset 2px 2px #fff;"><div class="a" style="left:3px;top:2px;width:9px;height:9px;box-sizing:border-box;border:1px solid #000;border-top-width:2px"></div></div>
<div class="a " style="left:561px;top:79px;width:16px;height:14px;background:#d4d0c8;box-shadow:inset -1px -1px #404040,inset 1px 1px #d4d0c8,inset -2px -2px #808080,inset 2px 2px #fff;"><svg class="a" style="left:4px;top:3px" width="8" height="7" viewBox="0 0 8 7"><path d="M0 0h2v1h1v1h2v-1h1v-1h2v1h-1v1h-1v1h-1v1h1v1h1v1h1v1h-2v-1h-1v-1h-2v1h-1v1h-2v-1h1v-1h1v-1h1v-1h-1v-1h-1v-1h-1z" fill="#000"/></svg></div>
<div class="a" style="left:16px;top:97px;width:562px;height:322px;background:#fff"></div>
<div class="a hatch" style="left:16px;top:97px;width:18px;height:308px;"></div>
<div class="a " style="left:16px;top:404px;width:16px;height:16px;background:#d4d0c8;box-shadow:inset -1px -1px #404040,inset 1px 1px #d4d0c8,inset -2px -2px #808080,inset 2px 2px #fff;"><svg class="a" style="left:5px;top:4px" width="4" height="7" shape-rendering="crispEdges"><path d="M3 0h1v7h-1v-1h-1v-1h-1v-1h-1v-1h1v-1h1v-1h1z" fill="#000"/></svg></div>
<div class="a " style="left:26px;top:102px;width:598px;height:350px;background:#d4d0c8;box-shadow:inset -1px -1px #404040,inset 1px 1px #d4d0c8,inset -2px -2px #808080,inset 2px 2px #fff;"></div>
<div class="a " style="left:30px;top:106px;width:590px;height:18px;background:linear-gradient(to right,#808080,#c0c0c0)"></div>
<svg class="a" style="left:32px;top:107px" width="16" height="16" shape-rendering="crispEdges"><path d="M3 2h1v1h-1zM4 2h1v1h-1zM5 2h1v1h-1zM6 2h1v1h-1zM7 2h1v1h-1zM8 2h1v1h-1zM9 2h1v1h-1zM10 2h1v1h-1zM11 2h1v1h-1zM12 2h1v1h-1zM13 2h1v1h-1zM3 3h1v1h-1zM5 3h1v1h-1zM7 3h1v1h-1zM9 3h1v1h-1zM11 3h1v1h-1zM13 3h1v1h-1zM4 4h1v1h-1zM5 4h1v1h-1zM6 4h1v1h-1zM7 4h1v1h-1zM8 4h1v1h-1zM9 4h1v1h-1zM10 4h1v1h-1zM11 4h1v1h-1zM12 4h1v1h-1zM13 4h1v1h-1zM8 5h1v1h-1zM10 5h1v1h-1zM12 5h1v1h-1zM13 5h1v1h-1zM5 6h1v1h-1zM13 6h1v1h-1zM5 7h1v1h-1zM13 7h1v1h-1zM4 8h1v1h-1zM12 8h1v1h-1zM4 9h1v1h-1zM12 9h1v1h-1zM3 10h1v1h-1zM11 10h1v1h-1zM3 11h1v1h-1zM11 11h1v1h-1zM2 12h1v1h-1zM11 12h1v1h-1zM2 13h1v1h-1zM4 13h1v1h-1zM6 13h1v1h-1zM8 13h1v1h-1zM10 13h1v1h-1zM11 13h1v1h-1zM2 14h1v1h-1zM3 14h1v1h-1zM4 14h1v1h-1zM5 14h1v1h-1zM6 14h1v1h-1zM7 14h1v1h-1zM8 14h1v1h-1zM9 14h1v1h-1zM10 14h1v1h-1zM11 14h1v1h-1zM12 14h1v1h-1zM13 14h1v1h-1zM14 14h1v1h-1z" fill="#000"/><path d="M4 3h1v1h-1zM6 3h1v1h-1zM8 3h1v1h-1zM10 3h1v1h-1zM12 3h1v1h-1zM7 5h1v1h-1zM9 5h1v1h-1zM11 5h1v1h-1zM6 6h1v1h-1zM7 6h1v1h-1zM8 6h1v1h-1zM9 6h1v1h-1zM10 6h1v1h-1zM11 6h1v1h-1zM12 6h1v1h-1zM6 7h1v1h-1zM8 7h1v1h-1zM10 7h1v1h-1zM12 7h1v1h-1zM5 8h1v1h-1zM6 8h1v1h-1zM8 8h1v1h-1zM10 8h1v1h-1zM11 8h1v1h-1zM5 9h1v1h-1zM7 9h1v1h-1zM9 9h1v1h-1zM11 9h1v1h-1zM4 10h1v1h-1zM5 10h1v1h-1zM7 10h1v1h-1zM9 10h1v1h-1zM10 10h1v1h-1zM4 11h1v1h-1zM6 11h1v1h-1zM8 11h1v1h-1zM10 11h1v1h-1zM3 12h1v1h-1zM4 12h1v1h-1zM5 12h1v1h-1zM6 12h1v1h-1zM7 12h1v1h-1zM8 12h1v1h-1zM9 12h1v1h-1zM10 12h1v1h-1zM13 12h1v1h-1zM3 13h1v1h-1zM5 13h1v1h-1zM7 13h1v1h-1zM9 13h1v1h-1zM12 13h1v1h-1zM13 13h1v1h-1z" fill="#ffff00"/><path d="M14 3h1v1h-1zM14 4h1v1h-1zM6 5h1v1h-1zM12 12h1v1h-1z" fill="#fff"/><path d="M7 7h1v1h-1zM9 7h1v1h-1zM11 7h1v1h-1zM7 8h1v1h-1zM9 8h1v1h-1zM6 9h1v1h-1zM8 9h1v1h-1zM10 9h1v1h-1zM6 10h1v1h-1zM8 10h1v1h-1zM5 11h1v1h-1zM7 11h1v1h-1zM9 11h1v1h-1z" fill="#5a5a8a"/></svg>
<div class="a t " style="left:51px;top:109px;font-weight:bold;font-size:12px;color:#d4d0c8">mygame.t</div>
<div class="a " style="left:568px;top:108px;width:16px;height:14px;background:#d4d0c8;box-shadow:inset -1px -1px #404040,inset 1px 1px #d4d0c8,inset -2px -2px #808080,inset 2px 2px #fff;"><div class="a" style="left:4px;top:9px;width:6px;height:2px;background:#000"></div></div>
<div class="a " style="left:584px;top:108px;width:16px;height:14px;background:#d4d0c8;box-shadow:inset -1px -1px #404040,inset 1px 1px #d4d0c8,inset -2px -2px #808080,inset 2px 2px #fff;"><div class="a" style="left:3px;top:2px;width:9px;height:9px;box-sizing:border-box;border:1px solid #000;border-top-width:2px"></div></div>
<div class="a " style="left:602px;top:108px;width:16px;height:14px;background:#d4d0c8;box-shadow:inset -1px -1px #404040,inset 1px 1px #d4d0c8,inset -2px -2px #808080,inset 2px 2px #fff;"><svg class="a" style="left:4px;top:3px" width="8" height="7" viewBox="0 0 8 7"><path d="M0 0h2v1h1v1h2v-1h1v-1h2v1h-1v1h-1v1h-1v1h1v1h1v1h1v1h-2v-1h-1v-1h-2v1h-1v1h-2v-1h1v-1h1v-1h1v-1h-1v-1h-1v-1h-1z" fill="#000"/></svg></div>
<div class="a" style="left:31px;top:126px;width:588px;height:321px;background:#fff"></div>
<div class="a hatch" style="left:31px;top:126px;width:18px;height:306px;"></div>
<div class="a " style="left:31px;top:432px;width:16px;height:16px;background:#d4d0c8;box-shadow:inset -1px -1px #404040,inset 1px 1px #d4d0c8,inset -2px -2px #808080,inset 2px 2px #fff;"><svg class="a" style="left:5px;top:4px" width="4" height="7" shape-rendering="crispEdges"><path d="M3 0h1v7h-1v-1h-1v-1h-1v-1h-1v-1h1v-1h1v-1h1z" fill="#000"/></svg></div>
<div class="a " style="left:47px;top:432px;width:200px;height:16px;background:#d4d0c8;box-shadow:inset -1px -1px #404040,inset 1px 1px #d4d0c8,inset -2px -2px #808080,inset 2px 2px #fff;"></div>
<div class="a " style="left:604px;top:126px;width:16px;height:16px;background:#d4d0c8;box-shadow:inset -1px -1px #404040,inset 1px 1px #d4d0c8,inset -2px -2px #808080,inset 2px 2px #fff;"><svg class="a" style="left:4px;top:6px" width="8" height="5" shape-rendering="crispEdges"><path d="M3 0h1v1h1v1h1v1h1v1h-7v-1h1v-1h1v-1h1z" fill="#000"/></svg></div>
<div class="a trk" style="left:604px;top:142px;width:16px;height:274px;"></div>
<div class="a " style="left:604px;top:211px;width:16px;height:17px;background:#d4d0c8;box-shadow:inset -1px -1px #404040,inset 1px 1px #d4d0c8,inset -2px -2px #808080,inset 2px 2px #fff;"></div>
<div class="a " style="left:604px;top:416px;width:16px;height:16px;background:#d4d0c8;box-shadow:inset -1px -1px #404040,inset 1px 1px #d4d0c8,inset -2px -2px #808080,inset 2px 2px #fff;"><svg class="a" style="left:4px;top:7px" width="8" height="5" shape-rendering="crispEdges"><path d="M0 0h7v1h-1v1h-1v1h-1v1h-1v-1h-1v-1h-1v-1h-1z" fill="#000"/></svg></div>
<div class="a " style="left:604px;top:432px;width:16px;height:16px;background:#d4d0c8"><svg class="a" style="left:0;top:0" width="16" height="16" shape-rendering="crispEdges"><path d="M14 2L2 14M14 6L6 14M14 10L10 14" stroke="#fff" stroke-width="1" transform="translate(1.5,1.5)"/><path d="M14 3L3 14M14 4L4 14M14 7L7 14M14 8L8 14M14 11L11 14M14 12L12 14" stroke="#808080" stroke-width="1" transform="translate(1.5,1.5)"/></svg></div>
<div class="a " style="left:61px;top:85px;width:552px;height:365px;background:#d4d0c8;box-shadow:inset -1px -1px #404040,inset 1px 1px #d4d0c8,inset -2px -2px #808080,inset 2px 2px #fff;"></div>
<div class="a " style="left:65px;top:89px;width:544px;height:18px;background:linear-gradient(to right,#0a246a,#a6caf0)"></div>
<svg class="a" style="left:67px;top:90px" width="16" height="16" shape-rendering="crispEdges"><path d="M3 2h1v1h-1zM4 2h1v1h-1zM5 2h1v1h-1zM6 2h1v1h-1zM7 2h1v1h-1zM8 2h1v1h-1zM9 2h1v1h-1zM10 2h1v1h-1zM11 2h1v1h-1zM12 2h1v1h-1zM13 2h1v1h-1zM3 3h1v1h-1zM5 3h1v1h-1zM7 3h1v1h-1zM9 3h1v1h-1zM11 3h1v1h-1zM13 3h1v1h-1zM4 4h1v1h-1zM5 4h1v1h-1zM6 4h1v1h-1zM7 4h1v1h-1zM8 4h1v1h-1zM9 4h1v1h-1zM10 4h1v1h-1zM11 4h1v1h-1zM12 4h1v1h-1zM13 4h1v1h-1zM8 5h1v1h-1zM10 5h1v1h-1zM12 5h1v1h-1zM13 5h1v1h-1zM5 6h1v1h-1zM13 6h1v1h-1zM5 7h1v1h-1zM13 7h1v1h-1zM4 8h1v1h-1zM12 8h1v1h-1zM4 9h1v1h-1zM12 9h1v1h-1zM3 10h1v1h-1zM11 10h1v1h-1zM3 11h1v1h-1zM11 11h1v1h-1zM2 12h1v1h-1zM11 12h1v1h-1zM2 13h1v1h-1zM4 13h1v1h-1zM6 13h1v1h-1zM8 13h1v1h-1zM10 13h1v1h-1zM11 13h1v1h-1zM2 14h1v1h-1zM3 14h1v1h-1zM4 14h1v1h-1zM5 14h1v1h-1zM6 14h1v1h-1zM7 14h1v1h-1zM8 14h1v1h-1zM9 14h1v1h-1zM10 14h1v1h-1zM11 14h1v1h-1zM12 14h1v1h-1zM13 14h1v1h-1zM14 14h1v1h-1z" fill="#000"/><path d="M4 3h1v1h-1zM6 3h1v1h-1zM8 3h1v1h-1zM10 3h1v1h-1zM12 3h1v1h-1zM7 5h1v1h-1zM9 5h1v1h-1zM11 5h1v1h-1zM6 6h1v1h-1zM7 6h1v1h-1zM8 6h1v1h-1zM9 6h1v1h-1zM10 6h1v1h-1zM11 6h1v1h-1zM12 6h1v1h-1zM6 7h1v1h-1zM8 7h1v1h-1zM10 7h1v1h-1zM12 7h1v1h-1zM5 8h1v1h-1zM6 8h1v1h-1zM8 8h1v1h-1zM10 8h1v1h-1zM11 8h1v1h-1zM5 9h1v1h-1zM7 9h1v1h-1zM9 9h1v1h-1zM11 9h1v1h-1zM4 10h1v1h-1zM5 10h1v1h-1zM7 10h1v1h-1zM9 10h1v1h-1zM10 10h1v1h-1zM4 11h1v1h-1zM6 11h1v1h-1zM8 11h1v1h-1zM10 11h1v1h-1zM3 12h1v1h-1zM4 12h1v1h-1zM5 12h1v1h-1zM6 12h1v1h-1zM7 12h1v1h-1zM8 12h1v1h-1zM9 12h1v1h-1zM10 12h1v1h-1zM13 12h1v1h-1zM3 13h1v1h-1zM5 13h1v1h-1zM7 13h1v1h-1zM9 13h1v1h-1zM12 13h1v1h-1zM13 13h1v1h-1z" fill="#ffff00"/><path d="M14 3h1v1h-1zM14 4h1v1h-1zM6 5h1v1h-1zM12 12h1v1h-1z" fill="#fff"/><path d="M7 7h1v1h-1zM9 7h1v1h-1zM11 7h1v1h-1zM7 8h1v1h-1zM9 8h1v1h-1zM6 9h1v1h-1zM8 9h1v1h-1zM10 9h1v1h-1zM6 10h1v1h-1zM8 10h1v1h-1zM5 11h1v1h-1zM7 11h1v1h-1zM9 11h1v1h-1z" fill="#5a5a8a"/></svg>
<div class="a t " style="left:86px;top:92px;font-weight:bold;font-size:12px;color:#fff">adv.t</div>
<div class="a " style="left:557px;top:91px;width:16px;height:14px;background:#d4d0c8;box-shadow:inset -1px -1px #404040,inset 1px 1px #d4d0c8,inset -2px -2px #808080,inset 2px 2px #fff;"><div class="a" style="left:4px;top:9px;width:6px;height:2px;background:#000"></div></div>
<div class="a " style="left:573px;top:91px;width:16px;height:14px;background:#d4d0c8;box-shadow:inset -1px -1px #404040,inset 1px 1px #d4d0c8,inset -2px -2px #808080,inset 2px 2px #fff;"><div class="a" style="left:3px;top:2px;width:9px;height:9px;box-sizing:border-box;border:1px solid #000;border-top-width:2px"></div></div>
<div class="a " style="left:591px;top:91px;width:16px;height:14px;background:#d4d0c8;box-shadow:inset -1px -1px #404040,inset 1px 1px #d4d0c8,inset -2px -2px #808080,inset 2px 2px #fff;"><svg class="a" style="left:4px;top:3px" width="8" height="7" viewBox="0 0 8 7"><path d="M0 0h2v1h1v1h2v-1h1v-1h2v1h-1v1h-1v1h-1v1h1v1h1v1h1v1h-2v-1h-1v-1h-2v1h-1v1h-2v-1h1v-1h1v-1h1v-1h-1v-1h-1v-1h-1z" fill="#000"/></svg></div>
<div class="a" style="left:65px;top:107px;width:544px;height:323px;background:#fff"></div>
<div class="a hatch" style="left:66px;top:108px;width:18px;height:322px;"></div>
<div class="a" style="left:84px;top:108px;width:509px;height:322px;overflow:hidden"><div class="a mono" style="left:3px;top:4px">*/
itemcnt: function(list)
{
    local cnt, tot, i, obj, j;

    tot := length(list);
    for (i := 1, cnt := 0 ; i &lt;= tot ; ++i)
    {
        /* only consider this item if it's to be listed */
        obj := list[i];
        if (obj.isListed)
        {
            /*
             *   see if there are other equivalent items later in the
             *   list - if so, don't count it (this ensures that each
             *   item is counted only once, since only the last one
             *   in the list will be counted)
             */
            if (obj.isEquivalent)
            {</div></div>
<svg class="a" style="left:70px;top:273px" width="15" height="13" viewBox="0 0 15 13"><path d="M1.5 4.5h6v-3l6 5-6 5v-3h-6z" fill="#ffff00" stroke="#000" stroke-width="1.6" stroke-linejoin="miter"/></svg>
<div class="a " style="left:593px;top:109px;width:16px;height:16px;background:#d4d0c8;box-shadow:inset -1px -1px #404040,inset 1px 1px #d4d0c8,inset -2px -2px #808080,inset 2px 2px #fff;"><svg class="a" style="left:4px;top:6px" width="8" height="5" shape-rendering="crispEdges"><path d="M3 0h1v1h1v1h1v1h1v1h-7v-1h1v-1h1v-1h1z" fill="#000"/></svg></div>
<div class="a trk" style="left:593px;top:125px;width:16px;height:290px;"></div>
<div class="a " style="left:593px;top:153px;width:16px;height:8px;background:#d4d0c8;box-shadow:inset -1px -1px #404040,inset 1px 1px #d4d0c8,inset -2px -2px #808080,inset 2px 2px #fff;"></div>
<div class="a " style="left:593px;top:414px;width:16px;height:16px;background:#d4d0c8;box-shadow:inset -1px -1px #404040,inset 1px 1px #d4d0c8,inset -2px -2px #808080,inset 2px 2px #fff;"><svg class="a" style="left:4px;top:7px" width="8" height="5" shape-rendering="crispEdges"><path d="M0 0h7v1h-1v1h-1v1h-1v1h-1v-1h-1v-1h-1v-1h-1z" fill="#000"/></svg></div>
<div class="a " style="left:66px;top:430px;width:16px;height:16px;background:#d4d0c8;box-shadow:inset -1px -1px #404040,inset 1px 1px #d4d0c8,inset -2px -2px #808080,inset 2px 2px #fff;"><svg class="a" style="left:5px;top:4px" width="4" height="7" shape-rendering="crispEdges"><path d="M3 0h1v7h-1v-1h-1v-1h-1v-1h-1v-1h1v-1h1v-1h1z" fill="#000"/></svg></div>
<div class="a " style="left:82px;top:430px;width:360px;height:16px;background:#d4d0c8;box-shadow:inset -1px -1px #404040,inset 1px 1px #d4d0c8,inset -2px -2px #808080,inset 2px 2px #fff;"></div>
<div class="a trk" style="left:442px;top:430px;width:135px;height:16px;"></div>
<div class="a " style="left:577px;top:430px;width:16px;height:16px;background:#d4d0c8;box-shadow:inset -1px -1px #404040,inset 1px 1px #d4d0c8,inset -2px -2px #808080,inset 2px 2px #fff;"><svg class="a" style="left:6px;top:4px" width="4" height="7" shape-rendering="crispEdges"><path d="M0 0h1v1h1v1h1v1h1v1h-1v1h-1v1h-1v1h-1z" fill="#000"/></svg></div>
<div class="a " style="left:593px;top:430px;width:16px;height:16px;background:#d4d0c8"><svg class="a" style="left:0;top:0" width="16" height="16" shape-rendering="crispEdges"><path d="M14 2L2 14M14 6L6 14M14 10L10 14" stroke="#fff" stroke-width="1" transform="translate(1.5,1.5)"/><path d="M14 3L3 14M14 4L4 14M14 7L7 14M14 8L8 14M14 11L11 14M14 12L12 14" stroke="#808080" stroke-width="1" transform="translate(1.5,1.5)"/></svg></div>
<div class="a" style="left:632px;top:69px;width:1px;height:388px;background:#404040"></div>
<div class="a" style="left:633px;top:69px;width:204px;height:1px;background:#ffffff"></div>
<div class="a" style="left:633px;top:69px;width:1px;height:387px;background:#ffffff"></div>
<div class="a" style="left:837px;top:69px;width:1px;height:388px;background:#808080"></div>
<div class="a" style="left:633px;top:456px;width:205px;height:1px;background:#808080"></div>
<div class="a" style="left:633px;top:457px;width:205px;height:1px;background:#ffffff"></div>
<div class="a t " style="left:636px;top:73px;font-weight:bold;font-size:11px">Stack</div>
<div class="a" style="left:671px;top:77px;width:147px;height:1px;background:#ffffff"></div>
<div class="a" style="left:671px;top:78px;width:147px;height:1px;background:#808080"></div>
<div class="a" style="left:671px;top:80px;width:147px;height:1px;background:#ffffff"></div>
<div class="a" style="left:671px;top:81px;width:147px;height:1px;background:#808080"></div>
<div class="a " style="left:823px;top:74px;width:12px;height:12px;background:#d4d0c8;box-shadow:inset -1px -1px #000,inset 1px 1px #fff"><svg class="a" style="left:3px;top:3px" width="6" height="5" shape-rendering="crispEdges"><path d="M0 0h2v1h-2zM4 0h2v1h-2zM1 1h4v1h-4zM2 2h2v1h-2zM1 3h4v1h-4zM0 4h2v1h-2zM4 4h2v1h-2z" fill="#000"/></svg></div>
<div class="a" style="left:634px;top:88px;width:186px;height:350px;background:#fff"></div>
<div class="a" style="left:634px;top:88px;width:186px;height:350px;overflow:hidden">
<div class="a mono" style="left:23px;top:4px">itemcnt([suitOfArmor frontDoor</div>
<div class="a mono" style="left:23px;top:20px">room&lt;self=startroom&gt;.enterRoom</div>
<div class="a mono" style="left:23px;top:36px">room&lt;self=startroom&gt;.lookAround</div>
<div class="a mono" style="left:23px;top:52px">init()</div>
</div>
<svg class="a" style="left:640px;top:93px" width="15" height="13" viewBox="0 0 15 13"><path d="M1.5 4.5h6v-3l6 5-6 5v-3h-6z" fill="#ffff00" stroke="#000" stroke-width="1.6" stroke-linejoin="miter"/></svg>
<div class="a" style="left:819px;top:117px;width:1px;height:2px;background:#000"></div>
<div class="a" style="left:819px;top:133px;width:1px;height:2px;background:#000"></div>
<div class="a " style="left:820px;top:89px;width:16px;height:16px;background:#d4d0c8;box-shadow:inset -1px -1px #404040,inset 1px 1px #d4d0c8,inset -2px -2px #808080,inset 2px 2px #fff;"><svg class="a" style="left:4px;top:6px" width="8" height="5" shape-rendering="crispEdges"><path d="M4 1h1v1h1v1h1v1h1v1h-7v-1h1v-1h1v-1h1z" fill="#fff"/><path d="M3 0h1v1h1v1h1v1h1v1h-7v-1h1v-1h1v-1h1z" fill="#808080"/></svg></div>
<div class="a trk" style="left:820px;top:105px;width:16px;height:318px;"></div>
<div class="a " style="left:820px;top:423px;width:16px;height:16px;background:#d4d0c8;box-shadow:inset -1px -1px #404040,inset 1px 1px #d4d0c8,inset -2px -2px #808080,inset 2px 2px #fff;"><svg class="a" style="left:4px;top:7px" width="8" height="5" shape-rendering="crispEdges"><path d="M1 1h7v1h-1v1h-1v1h-1v1h-1v-1h-1v-1h-1v-1h-1z" fill="#fff"/><path d="M0 0h7v1h-1v1h-1v1h-1v1h-1v-1h-1v-1h-1v-1h-1z" fill="#808080"/></svg></div>
<div class="a " style="left:636px;top:439px;width:16px;height:16px;background:#d4d0c8;box-shadow:inset -1px -1px #404040,inset 1px 1px #d4d0c8,inset -2px -2px #808080,inset 2px 2px #fff;"><svg class="a" style="left:5px;top:4px" width="4" height="7" shape-rendering="crispEdges"><path d="M3 0h1v7h-1v-1h-1v-1h-1v-1h-1v-1h1v-1h1v-1h1z" fill="#000"/></svg></div>
<div class="a " style="left:652px;top:439px;width:63px;height:16px;background:#d4d0c8;box-shadow:inset -1px -1px #404040,inset 1px 1px #d4d0c8,inset -2px -2px #808080,inset 2px 2px #fff;"></div>
<div class="a trk" style="left:715px;top:439px;width:89px;height:16px;"></div>
<div class="a " style="left:804px;top:439px;width:16px;height:16px;background:#d4d0c8;box-shadow:inset -1px -1px #404040,inset 1px 1px #d4d0c8,inset -2px -2px #808080,inset 2px 2px #fff;"><svg class="a" style="left:6px;top:4px" width="4" height="7" shape-rendering="crispEdges"><path d="M0 0h1v1h1v1h1v1h1v1h-1v1h-1v1h-1v1h-1z" fill="#000"/></svg></div>
<div class="a " style="left:820px;top:439px;width:16px;height:16px;background:#d4d0c8"></div>
<div class="a" style="left:4px;top:461px;width:834px;height:1px;background:#404040"></div>
<div class="a" style="left:4px;top:462px;width:410px;height:1px;background:#ffffff"></div>
<div class="a" style="left:420px;top:462px;width:417px;height:1px;background:#ffffff"></div>
<div class="a" style="left:4px;top:462px;width:1px;height:131px;background:#ffffff"></div>
<div class="a" style="left:414px;top:462px;width:1px;height:131px;background:#808080"></div>
<div class="a" style="left:4px;top:592px;width:411px;height:1px;background:#808080"></div>
<div class="a" style="left:415px;top:462px;width:1px;height:131px;background:#ffffff"></div>
<div class="a" style="left:419px;top:461px;width:1px;height:132px;background:#404040"></div>
<div class="a" style="left:420px;top:462px;width:1px;height:131px;background:#ffffff"></div>
<div class="a" style="left:837px;top:462px;width:1px;height:131px;background:#808080"></div>
<div class="a" style="left:420px;top:592px;width:418px;height:1px;background:#808080"></div>
<div class="a " style="left:9px;top:465px;width:12px;height:12px;background:#d4d0c8;box-shadow:inset -1px -1px #000,inset 1px 1px #fff"><svg class="a" style="left:3px;top:3px" width="6" height="5" shape-rendering="crispEdges"><path d="M0 0h2v1h-2zM4 0h2v1h-2zM1 1h4v1h-4zM2 2h2v1h-2zM1 3h4v1h-4zM0 4h2v1h-2zM4 4h2v1h-2z" fill="#000"/></svg></div>
<div class="a" style="left:12px;top:481px;width:1px;height:66px;background:#ffffff"></div>
<div class="a" style="left:13px;top:481px;width:1px;height:67px;background:#808080"></div>
<div class="a" style="left:12px;top:547px;width:1px;height:1px;background:#808080"></div>
<div class="a" style="left:16px;top:481px;width:1px;height:66px;background:#ffffff"></div>
<div class="a" style="left:17px;top:481px;width:1px;height:67px;background:#808080"></div>
<div class="a" style="left:16px;top:547px;width:1px;height:1px;background:#808080"></div>
<div class="a t " style="left:9px;top:590px;font-weight:bold;font-size:12px;transform:rotate(-90deg);transform-origin:0 0">Locals</div>
<div class="a" style="left:24px;top:463px;width:373px;height:112px;background:#fff"></div>
<div class="a " style="left:24px;top:463px;width:373px;height:16px;background:#d4d0c8;border-bottom:1px solid #000;box-sizing:border-box;box-shadow:inset 1px 1px #fff"></div>
<div class="a t " style="left:25px;top:464px;font-weight:bold;font-size:11px;letter-spacing:0.2px">Expression</div>
<div class="a" style="left:169px;top:465px;width:1px;height:13px;background:#000"></div>
<div class="a" style="left:170px;top:465px;width:1px;height:13px;background:#ffffff"></div>
<div class="a t " style="left:172px;top:465px;font-weight:bold;font-size:12px;letter-spacing:0.3px">Value</div>
<div class="a mono" style="left:36px;top:480px">i</div>
<div class="a mono" style="left:170px;top:480px">4</div>
<div class="a" style="left:24px;top:496px;width:373px;height:1px;background:#d4d0c8"></div>
<div class="a mono" style="left:36px;top:498px">tot</div>
<div class="a mono" style="left:170px;top:498px">4</div>
<div class="a" style="left:24px;top:514px;width:373px;height:1px;background:#d4d0c8"></div>
<div class="a mono" style="left:36px;top:516px">cnt</div>
<div class="a mono" style="left:170px;top:516px">0</div>
<div class="a" style="left:24px;top:532px;width:373px;height:1px;background:#d4d0c8"></div>
<div class="a mono" style="left:36px;top:534px">obj</div>
<div class="a mono" style="left:170px;top:534px">portraits</div>
<div class="a" style="left:24px;top:550px;width:373px;height:1px;background:#d4d0c8"></div>
<div class="a " style="left:25px;top:537px;width:9px;height:9px;border:1px solid #000;box-sizing:border-box;background:#fff"><div class="a" style="left:1px;top:3px;width:5px;height:1px;background:#000"></div><div class="a" style="left:3px;top:1px;width:1px;height:5px;background:#000"></div></div>
<div class="a mono" style="left:36px;top:552px">j</div>
<div class="a mono" style="left:170px;top:552px">nil</div>
<div class="a" style="left:24px;top:568px;width:373px;height:1px;background:#d4d0c8"></div>
<div class="a mono" style="left:36px;top:570px">list</div>
<div class="a mono" style="left:170px;top:570px">[suitOfArmor frontDoor lamp]</div>
<div class="a" style="left:24px;top:586px;width:373px;height:1px;background:#d4d0c8"></div>
<div class="a " style="left:25px;top:573px;width:9px;height:9px;border:1px solid #000;box-sizing:border-box;background:#fff"><div class="a" style="left:1px;top:3px;width:5px;height:1px;background:#000"></div><div class="a" style="left:3px;top:1px;width:1px;height:5px;background:#000"></div></div>
<div class="a" style="left:169px;top:479px;width:1px;height:96px;background:#d4d0c8"></div>
<div class="a " style="left:397px;top:464px;width:16px;height:16px;background:#d4d0c8;box-shadow:inset -1px -1px #404040,inset 1px 1px #d4d0c8,inset -2px -2px #808080,inset 2px 2px #fff;"><svg class="a" style="left:4px;top:6px" width="8" height="5" shape-rendering="crispEdges"><path d="M3 0h1v1h1v1h1v1h1v1h-7v-1h1v-1h1v-1h1z" fill="#000"/></svg></div>
<div class="a " style="left:397px;top:480px;width:16px;height:56px;background:#d4d0c8;box-shadow:inset -1px -1px #404040,inset 1px 1px #d4d0c8,inset -2px -2px #808080,inset 2px 2px #fff;"></div>
<div class="a trk" style="left:397px;top:536px;width:16px;height:23px;"></div>
<div class="a " style="left:397px;top:559px;width:16px;height:16px;background:#d4d0c8;box-shadow:inset -1px -1px #404040,inset 1px 1px #d4d0c8,inset -2px -2px #808080,inset 2px 2px #fff;"><svg class="a" style="left:4px;top:7px" width="8" height="5" shape-rendering="crispEdges"><path d="M0 0h7v1h-1v1h-1v1h-1v1h-1v-1h-1v-1h-1v-1h-1z" fill="#000"/></svg></div>
<div class="a " style="left:24px;top:575px;width:373px;height:17px;background:#d4d0c8"></div>
<svg class="a" style="left:22px;top:576px" width="82" height="15"><polygon points="44.5,0.5 50.5,13.5 73.5,13.5 79.5,0.5" fill="#c0c0c0" stroke="#000" stroke-width="1"/><text x="54" y="11" font-family="Liberation Sans" font-size="11" fill="#000">self</text><polygon points="1,0 7.5,13.5 44.5,13.5 51,0" fill="#fff"/><polyline points="1.5,0 7.5,13.5 44.5,13.5 50.5,0" fill="none" stroke="#000" stroke-width="1"/><text x="12" y="11" font-family="Liberation Sans" font-size="11" fill="#000">Locals</text></svg>
<div class="a " style="left:103px;top:576px;width:15px;height:15px;background:#d4d0c8;box-shadow:inset -1px -1px #404040,inset 1px 1px #d4d0c8,inset -2px -2px #808080,inset 2px 2px #fff;"><svg class="a" style="left:4px;top:4px" width="4" height="7" shape-rendering="crispEdges"><path d="M3 0h1v7h-1v-1h-1v-1h-1v-1h-1v-1h1v-1h1v-1h1z" fill="#000"/></svg></div>
<div class="a " style="left:118px;top:576px;width:101px;height:15px;background:#d4d0c8;box-shadow:inset -1px -1px #404040,inset 1px 1px #d4d0c8,inset -2px -2px #808080,inset 2px 2px #fff;"></div>
<div class="a trk" style="left:219px;top:576px;width:163px;height:15px;"></div>
<div class="a " style="left:382px;top:576px;width:15px;height:15px;background:#d4d0c8;box-shadow:inset -1px -1px #404040,inset 1px 1px #d4d0c8,inset -2px -2px #808080,inset 2px 2px #fff;"><svg class="a" style="left:5px;top:4px" width="4" height="7" shape-rendering="crispEdges"><path d="M0 0h1v1h1v1h1v1h1v1h-1v1h-1v1h-1v1h-1z" fill="#000"/></svg></div>
<div class="a " style="left:425px;top:465px;width:12px;height:12px;background:#d4d0c8;box-shadow:inset -1px -1px #000,inset 1px 1px #fff"><svg class="a" style="left:3px;top:3px" width="6" height="5" shape-rendering="crispEdges"><path d="M0 0h2v1h-2zM4 0h2v1h-2zM1 1h4v1h-4zM2 2h2v1h-2zM1 3h4v1h-4zM0 4h2v1h-2zM4 4h2v1h-2z" fill="#000"/></svg></div>
<div class="a t " style="left:424px;top:589px;font-weight:bold;font-size:12px;transform:rotate(-90deg);transform-origin:0 0">Watch Expressions</div>
<div class="a" style="left:439px;top:463px;width:381px;height:112px;background:#fff"></div>
<div class="a " style="left:439px;top:463px;width:381px;height:16px;background:#d4d0c8;border-bottom:1px solid #000;box-sizing:border-box;box-shadow:inset 1px 1px #fff"></div>
<div class="a t " style="left:441px;top:464px;font-weight:bold;font-size:11px;letter-spacing:0.2px">Expression</div>
<div class="a" style="left:613px;top:465px;width:1px;height:13px;background:#000"></div>
<div class="a" style="left:614px;top:465px;width:1px;height:13px;background:#ffffff"></div>
<div class="a t " style="left:616px;top:465px;font-weight:bold;font-size:12px;letter-spacing:0.3px">Value</div>
<div class="a" style="left:439px;top:496px;width:381px;height:1px;background:#d4d0c8"></div>
<div class="a" style="left:613px;top:479px;width:1px;height:17px;background:#d4d0c8"></div>
<div class="a " style="left:820px;top:464px;width:16px;height:16px;background:#d4d0c8;box-shadow:inset -1px -1px #404040,inset 1px 1px #d4d0c8,inset -2px -2px #808080,inset 2px 2px #fff;"><svg class="a" style="left:4px;top:6px" width="8" height="5" shape-rendering="crispEdges"><path d="M4 1h1v1h1v1h1v1h1v1h-7v-1h1v-1h1v-1h1z" fill="#fff"/><path d="M3 0h1v1h1v1h1v1h1v1h-7v-1h1v-1h1v-1h1z" fill="#808080"/></svg></div>
<div class="a trk" style="left:820px;top:480px;width:16px;height:79px;"></div>
<div class="a " style="left:820px;top:559px;width:16px;height:16px;background:#d4d0c8;box-shadow:inset -1px -1px #404040,inset 1px 1px #d4d0c8,inset -2px -2px #808080,inset 2px 2px #fff;"><svg class="a" style="left:4px;top:7px" width="8" height="5" shape-rendering="crispEdges"><path d="M1 1h7v1h-1v1h-1v1h-1v1h-1v-1h-1v-1h-1v-1h-1z" fill="#fff"/><path d="M0 0h7v1h-1v1h-1v1h-1v1h-1v-1h-1v-1h-1v-1h-1z" fill="#808080"/></svg></div>
<div class="a " style="left:439px;top:575px;width:381px;height:17px;background:#d4d0c8"></div>
<svg class="a" style="left:437px;top:576px" width="224" height="15"><polygon points="161.5,0.5 167.5,13.5 215.5,13.5 221.5,0.5" fill="#c0c0c0" stroke="#000" stroke-width="1"/><text x="171" y="11" font-family="Liberation Sans" font-size="11" fill="#000">Watch 4</text><polygon points="108.5,0.5 114.5,13.5 159.5,13.5 165.5,0.5" fill="#c0c0c0" stroke="#000" stroke-width="1"/><text x="118" y="11" font-family="Liberation Sans" font-size="11" fill="#000">Watch 3</text><polygon points="56.5,0.5 62.5,13.5 106.5,13.5 112.5,0.5" fill="#c0c0c0" stroke="#000" stroke-width="1"/><text x="65" y="11" font-family="Liberation Sans" font-size="11" fill="#000">Watch 2</text><polygon points="1,0 7.5,13.5 56.5,13.5 63,0" fill="#fff"/><polyline points="1.5,0 7.5,13.5 56.5,13.5 62.5,0" fill="none" stroke="#000" stroke-width="1"/><text x="12" y="11" font-family="Liberation Sans" font-size="11" fill="#000">Watch 1</text></svg>
<div class="a " style="left:661px;top:576px;width:15px;height:15px;background:#d4d0c8;box-shadow:inset -1px -1px #404040,inset 1px 1px #d4d0c8,inset -2px -2px #808080,inset 2px 2px #fff;"><svg class="a" style="left:4px;top:4px" width="4" height="7" shape-rendering="crispEdges"><path d="M3 0h1v7h-1v-1h-1v-1h-1v-1h-1v-1h1v-1h1v-1h1z" fill="#000"/></svg></div>
<div class="a " style="left:676px;top:576px;width:50px;height:15px;background:#d4d0c8;box-shadow:inset -1px -1px #404040,inset 1px 1px #d4d0c8,inset -2px -2px #808080,inset 2px 2px #fff;"></div>
<div class="a trk" style="left:726px;top:576px;width:79px;height:15px;"></div>
<div class="a " style="left:805px;top:576px;width:15px;height:15px;background:#d4d0c8;box-shadow:inset -1px -1px #404040,inset 1px 1px #d4d0c8,inset -2px -2px #808080,inset 2px 2px #fff;"><svg class="a" style="left:5px;top:4px" width="4" height="7" shape-rendering="crispEdges"><path d="M0 0h1v1h1v1h1v1h1v1h-1v1h-1v1h-1v1h-1z" fill="#000"/></svg></div>
</div></body></html>
